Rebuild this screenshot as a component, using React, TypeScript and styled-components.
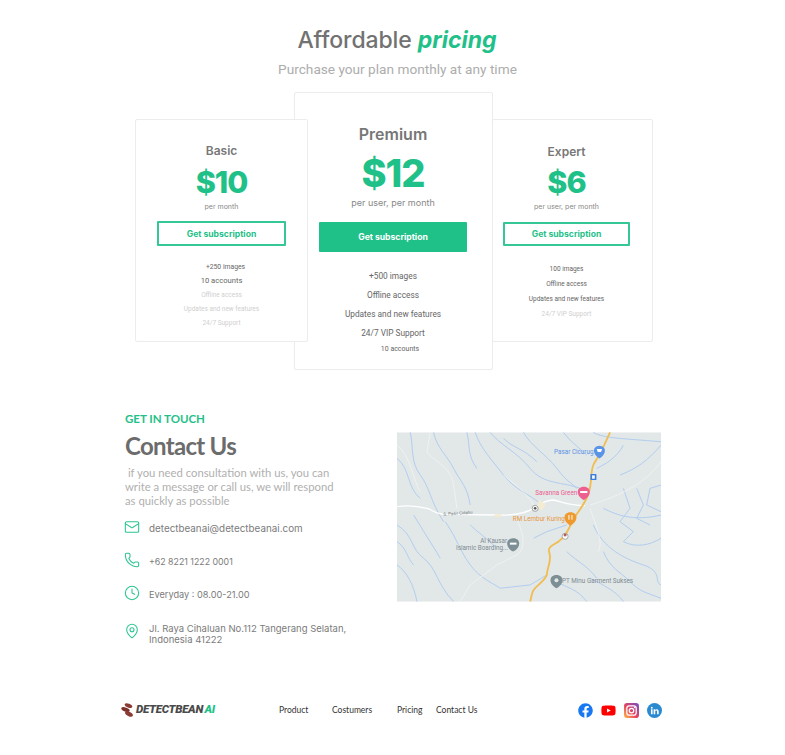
import React from "react";
import styled, { createGlobalStyle } from "styled-components";
import { Mail, Phone, Clock, MapPin } from "lucide-react";
import { FaFacebook, FaYoutube } from "react-icons/fa";

const GREEN = "#1fc189";
const HEAD = `"Inter", "Noto Sans", sans-serif`;
const BODY = `"Roboto", "Liberation Sans", sans-serif`;
const LATO = `"Lato", "Open Sans", sans-serif`;

const Global = createGlobalStyle`
  html, body { margin: 0; padding: 0; background: #fff; }
  * { box-sizing: border-box; }
`;

const Page = styled.div`
  width: 785px;
  height: 755px;
  overflow: hidden;
  display: flex;
  flex-direction: column;
  padding-top: 25px;
`;

const Title = styled.h1`
  margin: 0;
  padding-left: 9px;
  height: 30px;
  text-align: center;
  font: 500 23px/30px ${HEAD};
  letter-spacing: -0.1px;
  color: #727272;
  em { color: ${GREEN}; font-weight: 700; letter-spacing: 0; }
`;

const Sub = styled.p`
  margin: 6px 0 0;
  padding-left: 10px;
  height: 16px;
  text-align: center;
  font: 400 13.65px/16px ${BODY};
  color: #adadad;
`;

const Cards = styled.div`
  margin: 15px 0 0 135px;
  display: flex;
  align-items: flex-start;
`;

const Card = styled.section<{ $w: number; $h: number; $top: number; $pad: number; $layer: number; $overlap?: number; $right?: number }>`
  position: relative;
  z-index: ${(p) => p.$layer};
  flex: none;
  width: ${(p) => p.$w}px;
  height: ${(p) => p.$h}px;
  margin-top: ${(p) => p.$top}px;
  margin-left: ${(p) => -(p.$overlap ?? 0)}px;
  padding-top: ${(p) => p.$pad}px;
  padding-right: ${(p) => p.$right ?? 0}px;
  background: #fff;
  border: 1px solid #ececec;
  border-radius: 2px;
  display: flex;
  flex-direction: column;
  align-items: center;
`;

const PlanName = styled.h2<{ $size: number; $h: number }>`
  margin: 0;
  height: ${(p) => p.$h}px;
  font: 600 ${(p) => p.$size}px/${(p) => p.$h}px ${HEAD};
  color: #777;
`;

const Price = styled.div<{ $size: number; $h: number }>`
  height: ${(p) => p.$h}px;
  font: 800 ${(p) => p.$size}px/${(p) => p.$h}px ${HEAD};
  letter-spacing: -1px;
  color: ${GREEN};
`;

const Per = styled.div<{ $size: number; $top?: number }>`
  height: 12px;
  margin-top: ${(p) => p.$top ?? 0}px;
  font: 400 ${(p) => p.$size}px/12px ${HEAD};
  color: #888;
`;

const Button = styled.button<{ $w: number; $h: number; $top: number; $solid?: boolean }>`
  flex: none;
  width: ${(p) => p.$w}px;
  height: ${(p) => p.$h}px;
  margin-top: ${(p) => p.$top}px;
  padding: ${(p) => (p.$solid ? 0 : "1px 0 0")};
  border-radius: 1px;
  border: ${(p) => (p.$solid ? "none" : `2px solid #35c796`)};
  background: ${(p) => (p.$solid ? GREEN : "#fff")};
  color: ${(p) => (p.$solid ? "#fff" : GREEN)};
  font: 700 8.6px/1 ${HEAD};
`;

const Features = styled.ul<{ $top: number }>`
  margin: ${(p) => p.$top}px 0 0;
  padding: 0;
  list-style: none;
  text-align: center;
`;

const Feature = styled.li<{ $h: number; $size: number; $off?: boolean; $dx?: number }>`
  height: ${(p) => p.$h}px;
  font: 400 ${(p) => p.$size}px/${(p) => p.$h}px ${BODY};
  color: ${(p) => (p.$off ? "#cfcfcf" : "#666")};
  padding-left: ${(p) => p.$dx ?? 0}px;
  white-space: nowrap;
`;

const Contact = styled.div`
  margin: 42px 0 0 125px;
  display: flex;
  align-items: flex-start;
`;

const Info = styled.div`
  width: 272px;
  flex: none;
`;

const Eyebrow = styled.div`
  height: 14px;
  font: 700 11.5px/14px ${LATO};
  color: ${GREEN};
`;

const ContactTitle = styled.h2`
  margin: 5px 0 0;
  height: 30px;
  font: 700 24px/30px ${LATO};
  letter-spacing: -0.7px;
  color: #6c6c6c;
`;

const Lead = styled.p`
  margin: 5px 0 0;
  width: 215px;
  font: 400 11.3px/14px ${LATO};
  color: #b0b0b0;
  white-space: pre-wrap;
`;

const Methods = styled.ul`
  margin: 4px 0 0;
  padding: 0;
  list-style: none;
`;

const Method = styled.li<{ $h: number }>`
  height: ${(p) => p.$h}px;
  display: flex;
  align-items: center;
  color: #2cc592;
  svg { flex: none; margin: -3px 0 0 -1px; }
`;

const PinIcon = styled(MapPin)`
  && { margin-top: -6px; }
`;

const MethodText = styled.span<{ $size: number }>`
  margin-left: 9px;
  font: 400 ${(p) => p.$size}px/11px ${HEAD};
  color: #7b7b7b;
  white-space: pre-line;
`;

const MapBox = styled.div`
  margin-top: 20px;
  width: 264px;
  height: 170px;
  flex: none;
  svg { display: block; }
`;

const Footer = styled.footer`
  margin: 43px 0 0 120px;
  width: 542px;
  height: 20px;
  display: flex;
  align-items: center;
`;

const Logo = styled.div`
  width: 159px;
  display: flex;
  align-items: center;
  gap: 1px;
  flex: none;
`;

const LogoText = styled.span`
  font: italic 900 11.5px/1 Roboto, sans-serif;
  letter-spacing: -0.3px;
  word-spacing: -1px;
  color: #4a4a4a;
  b { color: ${GREEN}; font-weight: 900; }
`;

const Nav = styled.nav`
  display: flex;
  font: 400 8.5px/12px ${LATO};
  color: #333;
`;

const NavLink = styled.a<{ $w: number }>`
  display: block;
  width: ${(p) => p.$w}px;
  white-space: nowrap;
`;

const Socials = styled.div`
  margin-left: auto;
  display: flex;
  align-items: center;
  gap: 8px;
  svg { display: block; }
`;

const RIVERS = [
  "M60 22 C70 70 60 110 90 150 S120 230 160 290",
  "M20 100 C60 130 50 190 90 220",
  "M255 22 C270 70 310 110 340 150 S420 210 450 235",
  "M300 22 C330 60 380 80 420 130 S520 170 570 190",
  "M400 22 C420 60 470 90 500 130 S540 170 560 190",
  "M340 40 C370 70 400 70 440 110",
  "M520 22 C540 50 570 70 590 90",
  "M700 60 C680 100 640 120 620 130",
  "M813 60 C770 110 740 130 690 150",
  "M640 250 C680 270 730 290 813 270",
  "M700 190 L720 250 L690 290 L730 320 L700 350",
  "M740 190 L760 240 L740 280 L780 300",
  "M813 180 L780 190 L770 240 L813 260",
  "M610 300 C640 370 700 400 760 420 S790 470 813 480",
  "M640 380 C660 430 690 440 720 470 S760 500 813 520",
  "M20 300 C70 330 60 370 100 400 S140 480 190 530",
  "M70 270 C100 320 120 350 150 400",
  "M20 350 C50 370 50 400 70 420",
  "M165 290 C200 340 210 380 240 420 S300 470 330 490",
  "M330 490 L420 480 L470 450",
  "M240 300 C260 320 290 340 320 370",
  "M20 420 C50 440 70 480 80 530",
  "M500 470 C530 490 560 490 590 530",
  "M600 460 C640 480 680 500 700 530",
  "M430 340 L470 320 L530 300",
  "M230 22 C240 60 230 90 260 130",
  "M130 22 C140 70 170 90 190 130 S230 180 240 240",
  "M610 22 C640 40 700 40 813 50",
  "M700 350 C740 370 780 360 813 340",
  "M530 380 C560 410 590 420 620 460",
];

const WHITES = [
  "M20 60 C60 90 70 170 90 200",
  "M120 22 L110 80 C130 110 180 120 190 180 L200 250",
  "M340 150 C360 170 400 190 430 240",
  "M375 275 C400 320 410 370 380 390 L320 420 L240 480 L210 530",
  "M600 250 C620 310 640 350 625 380",
  "M813 110 C770 170 700 210 600 240",
];

const MapDrawing = () => (
  <svg width={264} height={170} viewBox="20 22 793 508">
    <rect x={20} y={22} width={793} height={508} fill="#e2e7e8" />
    {RIVERS.map((d) => (
      <path key={d} d={d} fill="none" stroke="#a9c8f0" strokeWidth={2.6} />
    ))}
    {WHITES.map((d) => (
      <path key={d} d={d} fill="none" stroke="#f3f5f5" strokeWidth={2.2} />
    ))}
    <path
      d="M20 245 C50 240 90 245 110 250 S130 268 170 268 L310 270 C350 272 400 268 430 250 S470 225 490 225 C520 232 540 242 585 242"
      fill="none"
      stroke="#ffffff"
      strokeWidth={4}
    />
    <path d="M310 272 a14 7 0 0 1 26 0 a14 7 0 0 1 -26 0 M445 225 l22 12 l-12 20 l-12 -10z" fill="#f4ecd0" />
    <path
      d="M660 22 C645 55 630 90 612 115 C600 135 606 170 598 195 C590 235 565 255 545 290 C535 320 525 335 505 350 C490 360 470 365 478 385 C485 410 470 430 470 450 C460 475 430 485 426 505 L420 530"
      fill="none"
      stroke="#f0bd50"
      strokeWidth={5.5}
    />
    <g fontFamily={BODY} fontSize={19}>
      <text x={492} y={88} fill="#5b93e6">Pasar Cicurug</text>
      <text x={435} y={211} fill="#ec5f8e">Savanna Green</text>
      <text x={368} y={288} fill="#e8973a">RM Lembur Kuring</text>
      <text x={270} y={354} fill="#7d8c90">Al Kausar</text>
      <text x={197} y={374} fill="#7d8c90">Islamic Boarding...</text>
      <text x={516} y={475} fill="#7d8c90">PT Minu Garment Sukses</text>
      <text x={160} y={272} fill="#6f7a7d" fontSize={13} transform="rotate(-4 160 272)">S. Pasir Cidahu</text>
    </g>
    <path d="M628 62 c-22 0 -22 26 0 38 c22 -12 22 -38 0 -38z" fill="#5b93e6" />
    <path d="M620 72 h16 l-3 9 h-10z" fill="#fff" />
    <path d="M581 185 c-24 0 -24 28 0 40 c24 -12 24 -40 0 -40z" fill="#ec5f8e" />
    <rect x={570} y={198} width={22} height={6} fill="#fff" />
    <path d="M541 262 c-24 0 -24 28 0 40 c24 -12 24 -40 0 -40z" fill="#ee9a2c" />
    <rect x={535} y={270} width={3} height={14} fill="#fff" />
    <rect x={544} y={270} width={3} height={14} fill="#fff" />
    <path d="M369 340 c-24 0 -24 28 0 40 c24 -12 24 -40 0 -40z" fill="#7d8f94" />
    <rect x={359} y={353} width={20} height={6} fill="#fff" />
    <path d="M499 450 c-24 0 -24 28 0 40 c24 -12 24 -40 0 -40z" fill="#7d8f94" />
    <circle cx={499} cy={466} r={6} fill="#e2e7e8" />
    <rect x={601} y={147} width={18} height={18} rx={2} fill="#3a7de0" />
    <rect x={606} y={151} width={8} height={10} fill="#fff" />
    <circle cx={435} cy={250} r={9} fill="#fff" stroke="#777" strokeWidth={2} />
    <circle cx={435} cy={250} r={4} fill="#555" />
    <circle cx={525} cy={334} r={9} fill="#fff" stroke="#888" strokeWidth={2} />
    <rect x={521} y={326} width={8} height={8} fill="#b25b5b" />
  </svg>
);

const Beans = () => (
  <svg width={15} height={14} viewBox="0 0 15 14">
    <ellipse cx={8.5} cy={2.6} rx={4} ry={2} fill="#8a3b33" transform="rotate(20 8.5 2.6)" />
    <ellipse cx={5.5} cy={6.6} rx={4.4} ry={2.1} fill="#7a322b" transform="rotate(20 5.5 6.6)" />
    <ellipse cx={9} cy={11} rx={4.2} ry={2.1} fill="#8a3b33" transform="rotate(25 9 11)" />
  </svg>
);

const Instagram = () => (
  <svg width={15} height={15} viewBox="0 0 24 24">
    <defs>
      <linearGradient id="ig" x1="0" y1="1" x2="1" y2="0">
        <stop offset="0" stopColor="#fdc04b" />
        <stop offset="0.45" stopColor="#e8425f" />
        <stop offset="1" stopColor="#6a4fd0" />
      </linearGradient>
    </defs>
    <rect width={24} height={24} rx={5} fill="url(#ig)" />
    <rect x={4.5} y={4.5} width={15} height={15} rx={4} fill="none" stroke="#fff" strokeWidth={2} />
    <circle cx={12} cy={12} r={3.6} fill="none" stroke="#fff" strokeWidth={2} />
    <circle cx={16.8} cy={7.2} r={1.1} fill="#fff" />
  </svg>
);

const Linkedin = () => (
  <svg width={15} height={15} viewBox="0 0 24 24">
    <circle cx={12} cy={12} r={12} fill="#2a8ad0" />
    <path
      d="M6.3 10h2.6v8H6.3zM7.6 6a1.5 1.5 0 1 1 0 3 1.5 1.5 0 0 1 0-3zM10.6 10h2.5v1.2c.5-.8 1.4-1.4 2.6-1.4 2.3 0 3 1.5 3 3.8V18h-2.6v-3.9c0-1.2-.3-2-1.3-2-1.2 0-1.6.9-1.6 2V18h-2.6z"
      fill="#fff"
    />
  </svg>
);

export default function App() {
  return (
    <Page>
      <Global />
      <Title>
        Affordable <em>pricing</em>
      </Title>
      <Sub>Purchase your plan monthly at any time</Sub>

      <Cards>
        <Card $w={173} $h={223} $top={27} $pad={22} $layer={3}>
          <PlanName $size={12} $h={18}>Basic</PlanName>
          <Price $size={30.5} $h={44}>$10</Price>
          <Per $size={7} $top={-3}>per month</Per>
          <Button $w={129} $h={25} $top={8}>Get subscription</Button>
          <Features $top={15}>
            <Feature $h={13} $size={6.8} $dx={8}>+250 images</Feature>
            <Feature $h={14} $size={7.6}>10 accounts</Feature>
            <Feature $h={14} $size={6.5} $off>Offline access</Feature>
            <Feature $h={14} $size={6.5} $off>Updates and new features</Feature>
            <Feature $h={14} $size={6.5} $off>24/7 Support</Feature>
          </Features>
        </Card>
        <Card $w={199} $h={278} $top={0} $pad={33} $layer={2} $overlap={14} $right={1}>
          <PlanName $size={16} $h={17}>Premium</PlanName>
          <Price $size={38} $h={60}>$12</Price>
          <Per $size={9} $top={-6}>per user, per month</Per>
          <Button $w={148} $h={30} $top={13} $solid>Get subscription</Button>
          <Features $top={15}>
            <Feature $h={19} $size={8.3}>+500 images</Feature>
            <Feature $h={19} $size={8.3}>Offline access</Feature>
            <Feature $h={19} $size={8.3}>Updates and new features</Feature>
            <Feature $h={19} $size={8.3}>24/7 VIP Support</Feature>
            <Feature $h={12} $size={7} $dx={14}>10 accounts</Feature>
          </Features>
        </Card>
        <Card $w={161} $h={223} $top={27} $pad={23} $layer={1} $overlap={1} $right={12}>
          <PlanName $size={12} $h={18}>Expert</PlanName>
          <Price $size={30.5} $h={42}>$6</Price>
          <Per $size={7} $top={-2}>per user, per month</Per>
          <Button $w={127} $h={24} $top={9}>Get subscription</Button>
          <Features $top={16}>
            <Feature $h={15} $size={6.5}>100 images</Feature>
            <Feature $h={15} $size={6.5}>Offline access</Feature>
            <Feature $h={15} $size={6.5}>Updates and new features</Feature>
            <Feature $h={15} $size={6.5} $off>24/7 VIP Support</Feature>
          </Features>
        </Card>
      </Cards>

      <Contact>
        <Info>
          <Eyebrow>GET IN TOUCH</Eyebrow>
          <ContactTitle>Contact Us</ContactTitle>
          <Lead>{" if you need consultation with us, you can write a message or call us, we will respond as quickly as possible"}</Lead>
          <Methods>
            <Method $h={33}>
              <Mail size={16} strokeWidth={1.6} />
              <MethodText $size={9.85}>detectbeanai@detectbeanai.com</MethodText>
            </Method>
            <Method $h={33}>
              <Phone size={16} strokeWidth={1.6} />
              <MethodText $size={8.8}>+62 8221 1222 0001</MethodText>
            </Method>
            <Method $h={33}>
              <Clock size={16} strokeWidth={1.6} />
              <MethodText $size={9.2}>Everyday : 08.00-21.00</MethodText>
            </Method>
            <Method $h={46}>
              <PinIcon size={16} strokeWidth={1.6} />
              <MethodText $size={9.5}>{"Jl. Raya Cihaluan No.112 Tangerang Selatan,\nIndonesia 41222"}</MethodText>
            </Method>
          </Methods>
        </Info>
        <MapBox>
          <MapDrawing />
        </MapBox>
      </Contact>

      <Footer>
        <Logo>
          <Beans />
          <LogoText>DETECTBEAN <b>AI</b></LogoText>
        </Logo>
        <Nav>
          <NavLink $w={53}>Product</NavLink>
          <NavLink $w={65}>Costumers</NavLink>
          <NavLink $w={39}>Pricing</NavLink>
          <NavLink $w={50}>Contact Us</NavLink>
        </Nav>
        <Socials>
          <FaFacebook size={15} color="#1877f2" />
          <FaYoutube size={15} color="#f00" />
          <Instagram />
          <Linkedin />
        </Socials>
      </Footer>
    </Page>
  );
}
